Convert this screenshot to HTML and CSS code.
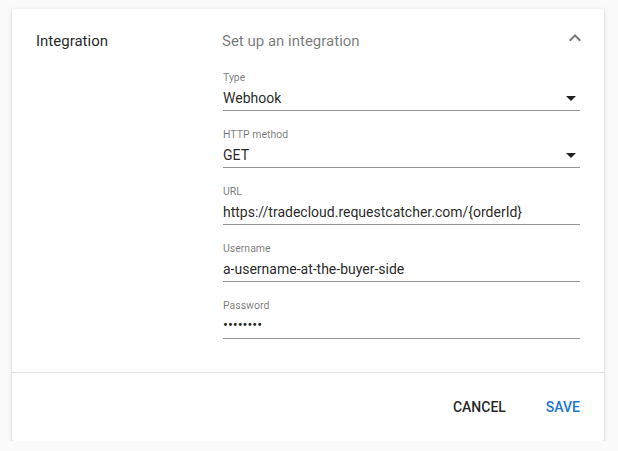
FILE: index.html
```html
<!DOCTYPE html>
<html lang="en">
<head>
<meta charset="utf-8">
<title>Integration</title>
<link rel="stylesheet" href="styles.css">
</head>
<body>
<div class="page">
  <section class="panel">
    <header class="panel-header">
      <div class="panel-title">Integration</div>
      <div class="panel-desc">Set up an integration</div>
      <svg class="chevron" width="24" height="24" viewBox="0 0 24 24" aria-hidden="true"><path d="M12 8l-6 6 1.41 1.41L12 10.83l4.59 4.58L18 14z" fill="rgba(0,0,0,0.54)"/></svg>
    </header>
    <div class="panel-body">
      <div class="spacer"></div>
      <div class="fields">
        <div class="field">
          <div class="field-label">Type</div>
          <div class="field-value select">
            <span>Webhook</span>
            <span class="arrow"></span>
          </div>
        </div>
        <div class="field">
          <div class="field-label">HTTP method</div>
          <div class="field-value select">
            <span>GET</span>
            <span class="arrow"></span>
          </div>
        </div>
        <div class="field">
          <div class="field-label">URL</div>
          <div class="field-value">https://tradecloud.requestcatcher.com/{orderId}</div>
        </div>
        <div class="field">
          <div class="field-label">Username</div>
          <div class="field-value">a-username-at-the-buyer-side</div>
        </div>
        <div class="field">
          <div class="field-label">Password</div>
          <div class="field-value password">••••••••</div>
        </div>
      </div>
    </div>
    <footer class="panel-actions">
      <button class="btn">Cancel</button>
      <button class="btn primary">Save</button>
    </footer>
  </section>
</div>
</body>
</html>
```

FILE: styles.css
```css
html, body {
  margin: 0;
  padding: 0;
  background: #fafafa;
  font-family: Roboto, "Liberation Sans", Arial, sans-serif;
  color: rgba(0, 0, 0, 0.87);
}

.page {
  padding: 9px 14px 0 12px;
}

.panel {
  background: #fff;
  border-radius: 2px;
  box-shadow: 0 3px 1px -2px rgba(0,0,0,.2), 0 2px 2px 0 rgba(0,0,0,.14), 0 1px 5px 0 rgba(0,0,0,.12);
}

.panel-header {
  box-sizing: border-box;
  height: 62px;
  padding: 1px 17px 0 24px;
  display: flex;
  align-items: center;
  font-size: 15px;
}

.panel-title {
  width: 170px;
  margin-right: 16px;
  flex: none;
}

.panel-desc {
  flex: 1;
  color: rgba(0, 0, 0, 0.54);
}

.chevron {
  flex: none;
  margin-top: -6px;
}

.panel-body {
  display: flex;
  padding: 0 24px 16px 24px;
}

.spacer {
  width: 187px;
  flex: none;
}

.fields {
  flex: 1;
}

.field {
  margin-bottom: 17px;
}

.field-label {
  font-size: 10.5px;
  line-height: 13px;
  height: 13px;
  color: rgba(0, 0, 0, 0.54);
}

.field-value {
  margin-top: 4px;
  font-size: 14px;
  line-height: 20px;
  height: 20px;
  padding-bottom: 2px;
  border-bottom: 1px solid rgba(0, 0, 0, 0.42);
  white-space: nowrap;
}

.select {
  display: flex;
  align-items: center;
  justify-content: space-between;
}

.arrow {
  width: 0;
  height: 0;
  border-left: 5px solid transparent;
  border-right: 5px solid transparent;
  border-top: 5px solid rgba(0, 0, 0, 0.87);
  margin-right: 4px;
  margin-top: 1px;
}

.password {
  font-size: 14.5px;
}

.panel-actions {
  display: flex;
  justify-content: flex-end;
  gap: 8px;
  padding: 16px 8px 16px 24px;
  border-top: 1px solid rgba(0, 0, 0, 0.12);
}

.btn {
  font-family: Roboto, "Liberation Sans", Arial, sans-serif;
  font-size: 14px;
  font-weight: 500;
  text-transform: uppercase;
  height: 36px;
  line-height: 36px;
  min-width: 64px;
  padding: 0 16px;
  border: 0;
  background: transparent;
  color: rgba(0, 0, 0, 0.87);
  border-radius: 4px;
}

.btn.primary {
  color: #1976d2;
}
```
